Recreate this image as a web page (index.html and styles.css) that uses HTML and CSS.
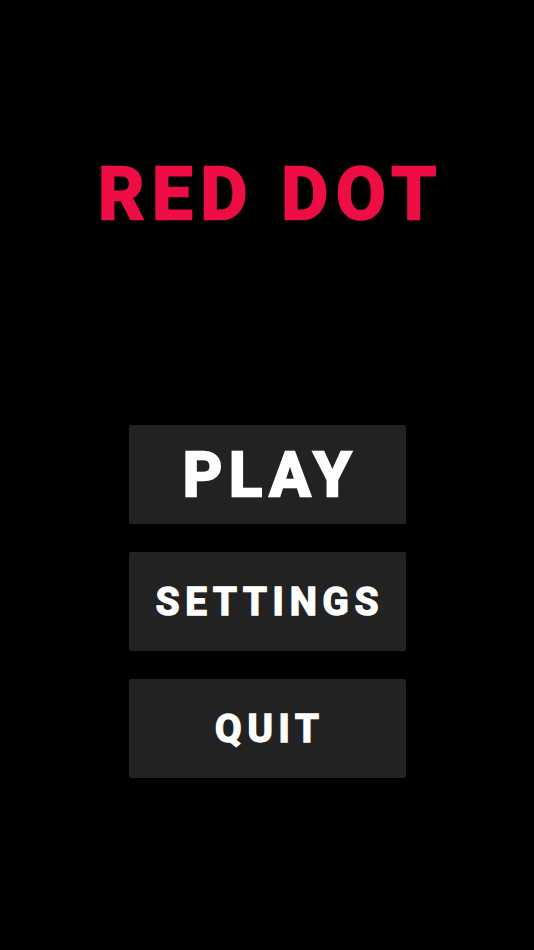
FILE: index.html
```html
<!DOCTYPE html>
<html lang="en">
<head>
    <meta charset="UTF-8">
    <meta name="viewport" content="width=device-width, initial-scale=1.0">
    <title>Red Dot</title>
    <link rel="stylesheet" href="styles.css">
</head>
<body>
    <div class="screen">
        <h1 class="title">RED DOT</h1>

        <nav class="menu">
            <button class="menu-btn btn-play"><span>PLAY</span></button>
            <button class="menu-btn"><span>SETTINGS</span></button>
            <button class="menu-btn"><span>QUIT</span></button>
        </nav>
    </div>
</body>
</html>
```

FILE: styles.css
```css
:root {
    --bg: #000000;
    --red: #ee0d45;
    --btn: #222222;
    --text: #ffffff;
}

* {
    margin: 0;
    padding: 0;
    box-sizing: border-box;
    font-family: Roboto, 'Liberation Sans', sans-serif;
}

body {
    background-color: var(--bg);
    height: 100vh;
}

.screen {
    display: flex;
    flex-direction: column;
    align-items: center;
    padding-top: 150px;
}

.title {
    color: var(--red);
    font-size: 72px;
    font-weight: 700;
    letter-spacing: 8px;
    line-height: 90px;
    margin-right: -8px;
    -webkit-text-stroke: 2.5px var(--red);
}

.menu {
    display: flex;
    flex-direction: column;
    gap: 28px;
    margin-top: 185px;
}

.menu-btn {
    width: 277px;
    height: 99px;
    background-color: var(--btn);
    color: var(--text);
    border: none;
    border-radius: 2px;
    font-size: 38.5px;
    font-weight: 700;
    letter-spacing: 5.8px;
    -webkit-text-stroke: 1.5px var(--text);
    cursor: pointer;
}

.menu-btn span {
    margin-right: -5.8px;
}

.btn-play {
    font-size: 61px;
    letter-spacing: 7px;
    -webkit-text-stroke: 2.5px var(--text);
}

.btn-play span {
    margin-right: -7px;
}
```
